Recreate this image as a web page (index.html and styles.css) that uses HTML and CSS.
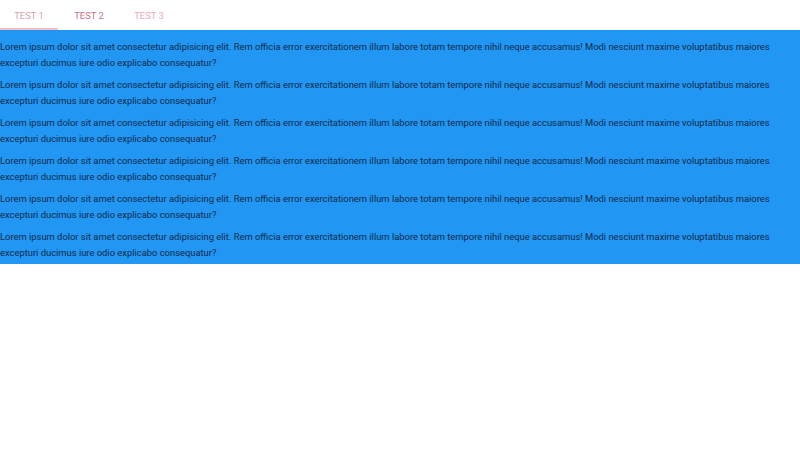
FILE: index.html
```html
<!DOCTYPE html>
<html>
<head>
<meta charset="utf-8">
<link rel="stylesheet" href="styles.css">
</head>
<body>
<nav class="tabs">
  <div class="tab tab-active">Test 1</div>
  <div class="tab tab-hover">Test 2</div>
  <div class="tab">Test 3</div>
</nav>
<section class="panel">
  <p>Lorem ipsum dolor sit amet consectetur adipisicing elit. Rem officia error exercitationem illum labore totam tempore nihil neque accusamus! Modi nesciunt maxime voluptatibus maiores excepturi ducimus iure odio explicabo consequatur?</p>
  <p>Lorem ipsum dolor sit amet consectetur adipisicing elit. Rem officia error exercitationem illum labore totam tempore nihil neque accusamus! Modi nesciunt maxime voluptatibus maiores excepturi ducimus iure odio explicabo consequatur?</p>
  <p>Lorem ipsum dolor sit amet consectetur adipisicing elit. Rem officia error exercitationem illum labore totam tempore nihil neque accusamus! Modi nesciunt maxime voluptatibus maiores excepturi ducimus iure odio explicabo consequatur?</p>
  <p>Lorem ipsum dolor sit amet consectetur adipisicing elit. Rem officia error exercitationem illum labore totam tempore nihil neque accusamus! Modi nesciunt maxime voluptatibus maiores excepturi ducimus iure odio explicabo consequatur?</p>
  <p>Lorem ipsum dolor sit amet consectetur adipisicing elit. Rem officia error exercitationem illum labore totam tempore nihil neque accusamus! Modi nesciunt maxime voluptatibus maiores excepturi ducimus iure odio explicabo consequatur?</p>
  <p>Lorem ipsum dolor sit amet consectetur adipisicing elit. Rem officia error exercitationem illum labore totam tempore nihil neque accusamus! Modi nesciunt maxime voluptatibus maiores excepturi ducimus iure odio explicabo consequatur?</p>
</section>
</body>
</html>
```
FILE: styles.css
```css
html, body {
  margin: 0;
  padding: 0;
  background: #ffffff;
  font-family: Roboto, "Liberation Sans", sans-serif;
}
.tabs {
  display: flex;
  height: 30px;
}
.tab {
  width: 58px;
  margin-right: 2px;
  display: flex;
  align-items: center;
  justify-content: center;
  font-size: 9.4px;
  text-transform: uppercase;
  color: #eeaab6;
  box-sizing: border-box;
  padding-top: 1px;
}
.tab-active {
  color: #d4a4ac;
  border-bottom: 2px solid #f8bcc4;
  padding-top: 3px;
}
.tab-hover {
  color: #c8707f;
}
.panel {
  background: #2196f3;
  padding: 9px 0 3px;
  display: flex;
  flex-direction: column;
  gap: 6px;
  box-shadow: 0 1px 2px rgba(0, 0, 0, 0.15);
}
.panel p {
  margin: 0;
  font-size: 9.4px;
  line-height: 16px;
  color: #0f2a49;
}
```
